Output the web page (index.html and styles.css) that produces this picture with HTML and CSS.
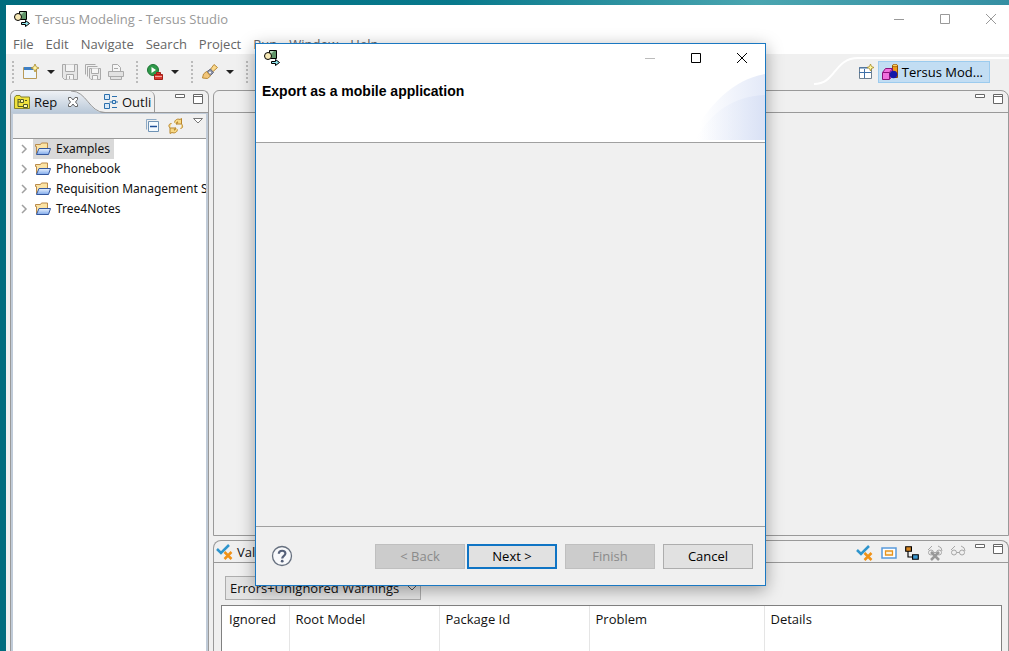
FILE: index.html
```html
<!DOCTYPE html>
<html lang="en">
<head>
<meta charset="utf-8">
<title>Tersus Modeling - Tersus Studio</title>
<link rel="stylesheet" href="styles.css">
</head>
<body>
<svg class="defs" aria-hidden="true">
  <defs>
    <linearGradient id="tabfill" x1="0" y1="0" x2="0" y2="1"><stop offset="0" stop-color="#eef1f5"/><stop offset="1" stop-color="#b9c8d8"/></linearGradient>
    <linearGradient id="foldfill" x1="0" y1="0" x2="0" y2="1"><stop offset="0" stop-color="#eaf3ff"/><stop offset="1" stop-color="#7fa9ea"/></linearGradient>
    <linearGradient id="swoosh" x1="0" y1="0" x2="1" y2="0"><stop offset="0.15" stop-color="#fff"/><stop offset="1" stop-color="#e3e9f8"/></linearGradient>
    <linearGradient id="swoosh2" x1="0" y1="0" x2="1" y2="0"><stop offset="0" stop-color="#f4f7fd" stop-opacity="0"/><stop offset="1" stop-color="#d9e1f5"/></linearGradient>
    <symbol id="i-app" viewBox="0 0 16 16"><path d="M5.500.5h7v8h-7z" fill="#5f9468" stroke="#000"/><path d="M6 1h4L6 5z" fill="#b8d8bc"/><circle cx="4" cy="6" r="3.500" fill="#f7e9b5" stroke="#000"/><path d="M7.500 11.500h4v-2l4 3-4 3v-2h-4z" fill="#8fe4ec" stroke="#000"/></symbol>
    <symbol id="i-folder" viewBox="0 0 16 16"><path d="M1.500 13V5.500H.5V3.500h5l1-1.500h6v5.500" fill="#fbe3a4" stroke="#b98a4a"/><path d="M1.500 13.500l2.500-6h11.500l-2 6z" fill="url(#foldfill)" stroke="#34589f"/></symbol>
    <symbol id="i-new" viewBox="0 0 16 16"><path d="M.5 3.500h13v11H.5z" fill="#eef6fd" stroke="#b89a58"/><path d="M1 3h9v3H1z" fill="#3e7fc4"/><path d="M12 0l1.200 2.800L16 4l-2.800 1.200L12 8l-1.200-2.800L8 4l2.800-1.200z" fill="#fff4a8" stroke="#a98a28" stroke-width=".8"/></symbol>
    <symbol id="i-save" viewBox="0 0 16 16"><path d="M.5.5h15v15H2.500l-2-2z" fill="#e6e6e6" stroke="#aaa"/><path d="M3.500.5v7h9v-7M4.500 15.500v-5h7v5M7.500 12v3" fill="#f4f4f4" stroke="#aaa"/></symbol>
    <symbol id="i-saveall" viewBox="0 0 16 16"><path d="M.5 10.500V.5h10M2.500 12.500V2.500h10" fill="none" stroke="#aaa"/><path d="M4.500 4.500h11v11H6l-1.500-1.500z" fill="#e8e8e8" stroke="#aaa"/><path d="M6.500 4.500v5h7v-5M7.500 15.500v-4h5v4" fill="#f6f6f6" stroke="#aaa"/></symbol>
    <symbol id="i-print" viewBox="0 0 16 16"><path d="M4.500 7.500v-7h5l3 3v4" fill="#f6f6f6" stroke="#aaa"/><path d="M.5 7.500h15v5H.5zM2.500 12.500h11v3h-11zM6 4.500h4" fill="#e2e2e2" stroke="#aaa"/></symbol>
    <symbol id="i-run" viewBox="0 0 16 16"><circle cx="6" cy="6" r="5.500" fill="#2f9a4b" stroke="#1d7434"/><path d="M4.500 3v6l4.500-3z" fill="#fff"/><path d="M7.500 10.500h8v5h-8zM9.500 10V8.500h4V10" fill="#d93a30" stroke="#a11f18"/><path d="M8 12.500h7" stroke="#f5a49e"/></symbol>
    <symbol id="i-torch" viewBox="0 0 16 16"><path d="M8 6l4-5.500 3.500 3L10.500 8z" fill="#fbd98c" stroke="#b98a38"/><path d="M4.500 8l4-3 3 3.500-3.500 3.500z" fill="#8d93a8" stroke="#666b80"/><path d="M.5 14l1-4 3-2.500L8.500 12l-3 2.500z" fill="#f2c67a" stroke="#b98a38"/><circle cx="8" cy="8.500" r="1" fill="#fff"/></symbol>
    <symbol id="i-repo" viewBox="0 0 16 16"><path d="M.5 3.500L2 1.500h4l1 1.500h8.500v11.500H.5z" fill="#f0e23c" stroke="#85822c"/><path d="M4 5v7.500h5M4 8h3M4 5.500h2" fill="none" stroke="#505a28"/><path d="M6.500 5.500h3v3h-3zM9.500 10.500h4v3h-4zM11 6.500h2" fill="#fff9ae" stroke="#505a28"/></symbol>
    <symbol id="i-outline" viewBox="0 0 16 16"><path d="M1.500.5h5v5h-5zM1.500 9.500h5v5h-5z" fill="#d7e8f8" stroke="#2b6fac"/><path d="M9 2.500h5M9 13.500h5M6.500 8H9M13 8h2" stroke="#2b6fac"/><path d="M9.500 6.500h3v3h-3z" fill="#d7e8f8" stroke="#2b6fac"/></symbol>
    <symbol id="i-collapse" viewBox="0 0 16 16"><path d="M2.500 11.500v-10h10" fill="none" stroke="#8fabc6"/><path d="M4.500 3.500h10v10h-10z" fill="#f4faff" stroke="#6f93b5"/><path d="M6 8.500h7" stroke="#1e4f98" stroke-width="1.500"/></symbol>
    <symbol id="i-link" viewBox="0 0 16 16"><path d="M6.500 4.500C7 1.500 9.500.5 12 1.500l1.500-1v5.500H8.500l1.500-2C8.500 3.500 8 5 8.500 6.500M13.500 6c2 2 1 4.500-1 4.500" fill="#f8d986" stroke="#b8862c"/><path d="M9.500 11.500C9 14.500 6.500 15.500 4 14.500l-2 1V10h5.500L6 12c1.500.5 2-1 1.500-2.500M2 10C0 8 1 5.500 3.500 5.500" fill="#f8d986" stroke="#b8862c"/></symbol>
    <symbol id="i-persp" viewBox="0 0 16 16"><path d="M1.500 3.500h12v11h-12z" fill="#fff" stroke="#6d7f90"/><path d="M1 4h9M1 8.500h12M6.500 5v9" stroke="#3f70a8"/><path d="M12.500 0l1 2.500 2.500 1-2.500 1-1 2.500-1-2.500-2.500-1 2.500-1z" fill="#fff9a0" stroke="#a98a28" stroke-width=".8"/></symbol>
    <symbol id="i-model" viewBox="0 0 16 16"><path d="M10.500 1.500h5v12h-5z" fill="#f09a18" stroke="#925000"/><ellipse cx="13" cy="1.500" rx="2.500" ry="1.200" fill="#ffd35c" stroke="#925000" stroke-width=".7"/><path d="M.5 8.500l3-4h7v7l-3 4h-7z" fill="#f070dc" stroke="#8a1078"/><path d="M1 8.500h6.500v6.500M7.500 8.500l3-4" fill="none" stroke="#8a1078"/><circle cx="11.500" cy="10.500" r="3.800" fill="#1518a8"/></symbol>
    <symbol id="i-check" viewBox="0 0 18 16"><path d="M1 5l4 4 8-8" fill="none" stroke="#2f95cd" stroke-width="2.500"/><path d="M8.500 8l7 7M15.500 8l-7 7" stroke="#f09218" stroke-width="2.500"/></symbol>
    <symbol id="i-focus" viewBox="0 0 16 12"><path d="M1 1h14v10H1z" fill="#fff" stroke="#5a9bdc" stroke-width="1.500"/><path d="M4.500 4h7v4h-7z" fill="#fff3d8" stroke="#e8941c" stroke-width="1.300"/></symbol>
    <symbol id="i-tree" viewBox="0 0 14 14"><path d="M3.500 5v5.500H8" fill="none" stroke="#000"/><path d="M1.500 1.500h5v4h-5z" fill="#d88620" stroke="#000"/><path d="M7.500 8.500h5v4h-5z" fill="#3a97d0" stroke="#000"/></symbol>
    <symbol id="i-glasses" viewBox="0 0 16 16"><path d="M1 5l4-4M11 1q4 1 4 5M6.500 7.500h3" fill="none" stroke="#a6a6a6"/><circle cx="4" cy="7.500" r="2.500" fill="none" stroke="#a6a6a6"/><circle cx="12" cy="7.500" r="2.500" fill="none" stroke="#a6a6a6"/></symbol>
    <symbol id="i-min" viewBox="0 0 12 12"><path d="M1.500 1.500h9v3h-9z" fill="#fff" stroke="#666"/></symbol>
    <symbol id="i-max" viewBox="0 0 12 12"><path d="M1.500 1.500h9v9h-9zM1 3.500h10" fill="#fff" stroke="#666"/></symbol>
    <symbol id="i-menu" viewBox="0 0 12 12"><path d="M1.500 1.500h9L6 6z" fill="#fff" stroke="#777"/></symbol>
    <symbol id="i-close" viewBox="0 0 12 12"><path d="M1.500 1.500h2.500l2 2.500 2-2.500h2.500v2L8.500 6l2 2.500v2H8L6 8l-2 2.500H1.500v-2l2-2.500-2-2.500z" fill="#fff" stroke="#666"/></symbol>
    <symbol id="i-chev" viewBox="0 0 8 10"><path d="M2 1l4 4-4 4" fill="none" stroke="#a0a0a0" stroke-width="1.500"/></symbol>
    <symbol id="w-min" viewBox="0 0 12 12"><path d="M1 6.500h10" stroke="currentColor"/></symbol>
    <symbol id="w-max" viewBox="0 0 12 12"><path d="M1.500 1.500h9v9h-9z" fill="none" stroke="currentColor"/></symbol>
    <symbol id="w-close" viewBox="0 0 12 12"><path d="M1 1l10 10M11 1L1 11" stroke="currentColor"/></symbol>
  </defs>
</svg>

<main class="window">
  <header class="titlebar">
    <svg class="icon"><use href="#i-app"/></svg>
    <h1 class="window-title">Tersus Modeling - Tersus Studio</h1>
    <div class="window-controls">
      <button class="flat" aria-label="Minimize"><svg class="wicon"><use href="#w-min"/></svg></button>
      <button class="flat" aria-label="Maximize"><svg class="wicon"><use href="#w-max"/></svg></button>
      <button class="flat" aria-label="Close"><svg class="wicon"><use href="#w-close"/></svg></button>
    </div>
  </header>
  <nav class="menubar">
    <button class="flat">File</button><button class="flat">Edit</button><button class="flat">Navigate</button><button class="flat">Search</button><button class="flat">Project</button><button class="flat">Run</button><button class="flat">Window</button><button class="flat">Help</button>
  </nav>
  <div class="toolbar">
    <div class="group">
      <button class="flat split" aria-label="New"><svg class="icon"><use href="#i-new"/></svg><span class="arrow"></span></button>
      <button class="flat" aria-label="Save"><svg class="icon"><use href="#i-save"/></svg></button>
      <button class="flat" aria-label="Save all"><svg class="icon"><use href="#i-saveall"/></svg></button>
      <button class="flat" aria-label="Print"><svg class="icon"><use href="#i-print"/></svg></button>
    </div>
    <div class="group">
      <button class="flat split" aria-label="Run"><svg class="icon"><use href="#i-run"/></svg><span class="arrow"></span></button>
    </div>
    <div class="group">
      <button class="flat split" aria-label="Search"><svg class="icon"><use href="#i-torch"/></svg><span class="arrow"></span></button>
    </div>
    <div class="group"></div>
    <div class="perspectives">
      <svg class="curve" viewBox="0 0 44 34"><path d="M0 30C22 30 20 4 44 4" fill="none" stroke="#fff" stroke-width="2"/></svg>
      <div class="perspective-list">
        <button class="flat" aria-label="Open perspective"><svg class="icon"><use href="#i-persp"/></svg></button>
        <button class="perspective"><svg class="icon"><use href="#i-model"/></svg>Tersus Mod...</button>
      </div>
    </div>
  </div>

  <div class="workspace">
    <section class="panel explorer">
      <div class="tabs">
        <div class="tab active">
          <svg class="tab-shape" viewBox="0 0 94 22"><path d="M0 22V4L4 0H60C76 0 78 22 94 22" fill="url(#tabfill)"/><path d="M60 0C76 0 78 21.500 94 21.500" fill="none" stroke="#999"/></svg>
          <svg class="icon"><use href="#i-repo"/></svg><span class="tab-label">Rep</span>
          <button class="flat" aria-label="Close view"><svg class="small"><use href="#i-close"/></svg></button>
        </div>
        <div class="tab second"><svg class="icon"><use href="#i-outline"/></svg><span>Outli</span></div>
        <div class="panel-tools">
          <button class="flat" aria-label="Minimize view"><svg class="small"><use href="#i-min"/></svg></button>
          <button class="flat" aria-label="Maximize view"><svg class="small"><use href="#i-max"/></svg></button>
        </div>
      </div>
      <div class="explorer-body">
        <div class="view-tools">
          <button class="flat" aria-label="Collapse all"><svg class="icon"><use href="#i-collapse"/></svg></button>
          <button class="flat" aria-label="Link with editor"><svg class="icon"><use href="#i-link"/></svg></button>
          <button class="flat view-menu" aria-label="View menu"><svg class="small"><use href="#i-menu"/></svg></button>
        </div>
        <ul class="tree">
          <li><svg class="chev"><use href="#i-chev"/></svg><span class="node selected"><svg class="icon"><use href="#i-folder"/></svg>Examples</span></li>
          <li><svg class="chev"><use href="#i-chev"/></svg><span class="node"><svg class="icon"><use href="#i-folder"/></svg>Phonebook</span></li>
          <li><svg class="chev"><use href="#i-chev"/></svg><span class="node"><svg class="icon"><use href="#i-folder"/></svg>Requisition Management S</span></li>
          <li><svg class="chev"><use href="#i-chev"/></svg><span class="node"><svg class="icon"><use href="#i-folder"/></svg>Tree4Notes</span></li>
        </ul>
      </div>
    </section>

    <div class="right">
      <section class="panel editor">
        <div class="tabs"><div class="panel-tools">
          <button class="flat" aria-label="Minimize editor"><svg class="small"><use href="#i-min"/></svg></button>
          <button class="flat" aria-label="Maximize editor"><svg class="small"><use href="#i-max"/></svg></button>
        </div></div>
      </section>
      <section class="panel validation">
        <div class="tabs">
          <div class="tab val"><svg class="check"><use href="#i-check"/></svg><span>Validation</span></div>
          <div class="panel-tools">
            <div class="actions">
              <button class="flat" aria-label="Validate"><svg class="check"><use href="#i-check"/></svg></button>
              <button class="flat" aria-label="Focus"><svg class="focus"><use href="#i-focus"/></svg></button>
              <button class="flat" aria-label="Show in tree"><svg class="icon"><use href="#i-tree"/></svg></button>
              <button class="flat" aria-label="Ignore"><svg class="icon" viewBox="0 0 16 16"><use href="#i-glasses"/><path d="M4 7l8 8M12 7l-8 8" stroke="#999" stroke-width="2.500"/></svg></button>
              <button class="flat" aria-label="Show ignored"><svg class="icon"><use href="#i-glasses"/></svg></button>
            </div>
            <button class="flat" aria-label="Minimize view"><svg class="small"><use href="#i-min"/></svg></button>
            <button class="flat" aria-label="Maximize view"><svg class="small"><use href="#i-max"/></svg></button>
          </div>
        </div>
        <div class="validation-body">
          <div class="filter-box">
            <select class="filter" aria-label="Filter"><option>Errors+Unignored Warnings</option></select>
            <svg class="filter-arrow" viewBox="0 0 10 6"><path d="M1 1l4 4 4-4" fill="none" stroke="#555"/></svg>
          </div>
          <div class="table-frame">
            <table class="problems">
              <colgroup><col class="c-ignored"><col class="c-mid"><col class="c-mid"><col class="c-problem"><col></colgroup>
              <thead><tr><th>Ignored</th><th>Root Model</th><th>Package Id</th><th>Problem</th><th>Details</th></tr></thead>
              <tbody><tr><td></td><td></td><td></td><td></td><td></td></tr></tbody>
            </table>
          </div>
        </div>
      </section>
    </div>
  </div>
</main>

<div class="dialog" role="dialog" aria-labelledby="dialog-title">
  <header class="dialog-head">
    <div class="dialog-bar">
      <svg class="icon"><use href="#i-app"/></svg>
      <div class="window-controls">
        <button class="flat disabled" aria-label="Minimize" disabled><svg class="wicon"><use href="#w-min"/></svg></button>
        <button class="flat" aria-label="Maximize"><svg class="wicon"><use href="#w-max"/></svg></button>
        <button class="flat" aria-label="Close"><svg class="wicon"><use href="#w-close"/></svg></button>
      </div>
    </div>
    <h2 class="dialog-title" id="dialog-title">Export as a mobile application</h2>
    <svg class="swoosh" viewBox="0 0 76 66"><path d="M0 66C20 30 45 5 76 0V66z" fill="url(#swoosh)"/><path d="M6 66C22 38 45 22 76 21V66z" fill="url(#swoosh2)"/></svg>
  </header>
  <div class="dialog-body"></div>
  <footer class="dialog-foot">
    <button class="flat help" aria-label="Help"><svg class="helpicon" viewBox="0 0 22 22"><circle cx="11" cy="11" r="9.500" fill="#f8f9fb" stroke="#66707f" stroke-width="1.300"/><path d="M7.800 8.700C8 4.800 14.400 4.800 14.400 8.500c0 2.300-3.200 2.400-3.200 5" fill="none" stroke="#56617a" stroke-width="2.200"/><circle cx="11.200" cy="16.200" r="1.400" fill="#56617a"/></svg></button>
    <button class="btn" disabled>&lt; Back</button>
    <button class="btn primary">Next &gt;</button>
    <button class="btn gap" disabled>Finish</button>
    <button class="btn gap">Cancel</button>
  </footer>
</div>
</body>
</html>
```
FILE: styles.css
```css
* { box-sizing: border-box; }

body {
  margin: 0;
  height: 100vh;
  padding: 5px 0 0 6px;
  overflow: hidden;
  background: linear-gradient(90deg, #006c7e, #08798c 45%, #4aa5b0 75%, #358fa3);
  font: 13px/20px "Open Sans", "Noto Sans", sans-serif;
  color: #111;
}

h1, h2, ul { margin: 0; padding: 0; font: inherit; list-style: none; }
svg { display: block; flex: none; }
.defs { position: absolute; width: 0; height: 0; }
.icon { width: 16px; height: 16px; }
.small, .wicon { width: 12px; height: 12px; }
.check { width: 18px; height: 16px; }
.focus { width: 16px; height: 12px; }
.chev { width: 8px; height: 10px; }

.flat {
  padding: 0;
  border: 0;
  background: none;
  font: inherit;
  color: inherit;
}

.window {
  height: 100%;
  display: flex;
  flex-direction: column;
  background: #f0f0f0;
}

.titlebar {
  display: flex;
  align-items: center;
  height: 28px;
  padding: 0 12px 0 8px;
  background: #fff;
  color: #999;
}
.window-title { margin-left: 5px; }
.window-controls { display: flex; gap: 34px; margin-left: auto; }

.menubar {
  display: flex;
  align-items: center;
  gap: 12px;
  height: 21px;
  padding-left: 7px;
  background: #fff;
  color: #666;
}

.toolbar { display: flex; height: 35px; align-items: center; padding-left: 6px; }
.group {
  display: flex;
  align-items: center;
  gap: 7px;
  height: 22px;
  padding: 0 12px 0 9px;
  border-left: 2px dotted #bbb;
}
.split { display: flex; align-items: center; gap: 8px; }
.arrow {
  border: 4px solid transparent;
  border-top-color: #222;
  border-bottom: 0;
}
.perspectives { display: flex; margin-left: auto; align-self: stretch; }
.curve { width: 44px; height: 34px; }
.perspective-list {
  display: flex;
  align-items: center;
  gap: 4px;
  margin-top: 3px;
  padding: 0 19px 4px 0;
  border-top: 2px solid #fff;
}
.perspective {
  display: flex;
  align-items: center;
  gap: 4px;
  height: 22px;
  padding: 0 6px 0 3px;
  border: 1px solid #9ccbee;
  background: #c2ddf3;
  font: inherit;
}

.workspace { flex: 1; display: flex; gap: 4px; min-height: 0; padding: 1px 0 0 4px; }
.panel { display: flex; flex-direction: column; border: 1px solid #999; }
.explorer { width: 199px; border-radius: 6px 6px 0 0; border-bottom: 0; }
.tabs { display: flex; height: 22px; border-bottom: 1px solid #999; }
.tab { display: flex; align-items: center; gap: 4px; }
.active { position: relative; width: 92px; padding-left: 3px; gap: 4px; }
.active > * { position: relative; }
.active .tab-shape { position: absolute; left: 0; top: 0; width: 94px; height: 22px; }
.active .flat { margin-left: 6px; }
.second { width: 52px; border-right: 1px solid #999; border-top-right-radius: 6px; gap: 3px; }
.panel-tools { display: flex; gap: 6px; margin: 2px 4px 0 auto; }
.panel-tools .flat, .view-menu { align-self: flex-start; }

.explorer-body { flex: 1; border: solid #c0cbd8; border-width: 1px 2px 0 2px; background: #fff; }
.view-tools {
  display: flex;
  align-items: center;
  justify-content: flex-end;
  gap: 8px;
  height: 25px;
  padding-right: 2px;
  background: #f0f0f0;
  border-bottom: 1px solid #999;
}
.view-menu { margin-top: 3px; }
.tree { font: 12px/20px "Noto Sans", "Open Sans", sans-serif; }
.tree li { display: flex; align-items: center; gap: 5px; padding-left: 7px; height: 20px; overflow: hidden; white-space: nowrap; }
.node { display: flex; align-items: center; gap: 5px; padding: 0 4px 0 2px; }
.selected { background: #d9d9d9; }

.right { flex: 1; display: flex; flex-direction: column; gap: 4px; min-width: 0; }
.editor { flex: 1; border-radius: 6px 8px 0 0; }
.validation { height: 111px; border-radius: 8px 8px 0 0; border-bottom: 0; }
.val { padding-left: 2px; gap: 3px; }
.actions { display: flex; gap: 7px; margin-right: 2px; }
.actions .flat { align-self: center; }

.validation-body { flex: 1; display: flex; flex-direction: column; align-items: flex-start; padding: 13px 6px 0 7px; }
.filter-box { position: relative; margin-left: 4px; }
.filter {
  display: block;
  appearance: none;
  height: 24px;
  width: 196px;
  padding: 0 4px;
  border: 1px solid #adadad;
  border-radius: 0;
  background: #e4e4e4;
  font: inherit;
  color: inherit;
}
.filter-arrow { position: absolute; right: 4px; top: 9px; width: 10px; height: 6px; pointer-events: none; }
.table-frame { flex: 1; align-self: stretch; margin-top: 5px; border: 1px solid #808080; border-bottom: 0; background: #fff; }
.problems { width: 100%; height: 100%; table-layout: fixed; border-collapse: collapse; }
.problems th { height: 25px; padding: 0 7px; font-weight: normal; text-align: left; }
.problems th + th, .problems td + td { border-left: 1px solid #e5e5e5; padding-left: 6px; }
.c-ignored { width: 67px; }
.c-mid { width: 150px; }
.c-problem { width: 175px; }

.dialog {
  position: absolute;
  left: 255px;
  top: 43px;
  width: 511px;
  display: flex;
  flex-direction: column;
  border: 1px solid #1a78c2;
  background: #f0f0f0;
  box-shadow: 0 4px 16px rgba(0, 0, 0, .35);
  color: #000;
}
.dialog-head { position: relative; height: 99px; background: #fff; border-bottom: 1px solid #a0a0a0; }
.dialog-bar { display: flex; align-items: center; height: 28px; padding: 0 17px 0 8px; }
.disabled { color: #bbb; }
.dialog-title { padding: 9px 6px; font: bold 14px/20px "Liberation Sans", Arial, sans-serif; }
.swoosh { position: absolute; right: 0; bottom: 2px; width: 76px; height: 66px; }
.dialog-body { height: 383px; }
.dialog-foot {
  display: flex;
  align-items: center;
  height: 59px;
  padding: 0 12px 0 15px;
  border-top: 1px solid #a0a0a0;
}
.help { margin-right: auto; }
.helpicon { width: 22px; height: 22px; }
.btn {
  width: 90px;
  height: 25px;
  padding: 0;
  border: 1px solid #adadad;
  background: #e1e1e1;
  font: inherit;
  color: #000;
}
.btn:disabled { border-color: #bfbfbf; background: #ccc; color: #8a8a8a; }
.primary { margin-left: 2px; border: 2px solid #0f74c4; }
.gap { margin-left: 8px; }
```
